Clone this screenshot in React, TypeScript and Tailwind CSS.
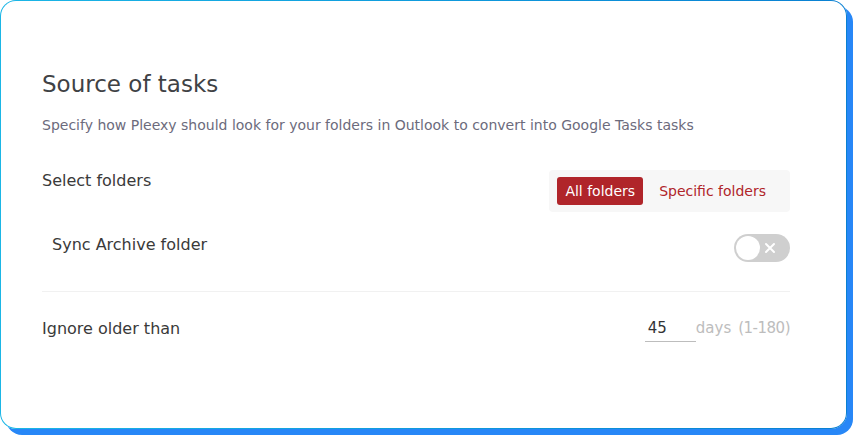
import React from "react";

function Toggle() {
  return (
    <div className="w-[56px] h-[28px] rounded-full bg-[#cfcfcf] flex items-center justify-between px-[2px]">
      <div className="w-[24px] h-[24px] rounded-full bg-white" />
      <svg width="12" height="12" viewBox="0 0 12 12" className="mr-[12px]">
        <path d="M2 2L10 10M10 2L2 10" stroke="#fff" strokeWidth="2" strokeLinecap="round" />
      </svg>
    </div>
  );
}

export default function App() {
  return (
    <div className="w-[854px] h-[435px] bg-white font-['DejaVu_Sans',sans-serif]">
      <div className="w-[847px] h-[429px] rounded-[16px] p-px bg-gradient-to-r from-[#1bb6e6] to-[#0a80d2] shadow-[6px_6px_0_#2787f7]">
        <div className="h-full rounded-[15px] bg-white pl-[41px] pr-[56px] pt-[68px]">
          <h1 className="text-[23px] leading-[30px] text-[#3f4245]">Source of tasks</h1>
          <p className="mt-[17px] text-[14px] leading-[18px] text-[#6c6b7c]">
            Specify how Pleexy should look for your folders in Outlook to convert into Google Tasks tasks
          </p>

          <div className="mt-[36px] flex items-start justify-between">
            <div className="pt-[1px] text-[16px] leading-[20px] font-medium text-[#3a3a3a]">Select folders</div>
            <div className="flex items-center rounded-[4px] bg-[#f7f7f7] px-[8px] py-[7px]">
              <button className="h-[28px] px-[8px] rounded-[3px] bg-[#b0252a] text-white text-[14px] font-medium">
                All folders
              </button>
              <button className="h-[28px] px-[16px] text-[#b0252a] text-[14px] font-medium">Specific folders</button>
            </div>
          </div>

          <div className="mt-[22px] flex items-start justify-between pl-[10px]">
            <div className="pt-[1px] text-[16px] leading-[20px] font-medium text-[#3a3a3a]">Sync Archive folder</div>
            <Toggle />
          </div>

          <div className="mt-[29px] h-px bg-[#f1f1f1]" />

          <div className="mt-[23px] flex items-center justify-between">
            <div className="text-[16px] leading-[20px] font-medium text-[#3a3a3a]">Ignore older than</div>
            <div className="flex items-center">
              <div className="w-[51px] border-b border-[#bdbdbd] pl-[3px] pb-[3px] pt-[3px] text-[15px] leading-[20px] text-[#333]">
                45
              </div>
              <span className="text-[15px] text-[#bdbdbd]">days</span>
              <span className="ml-[7px] text-[15px] tracking-[-0.5px] text-[#bdbdbd]">(1-180)</span>
            </div>
          </div>
        </div>
      </div>
    </div>
  );
}
